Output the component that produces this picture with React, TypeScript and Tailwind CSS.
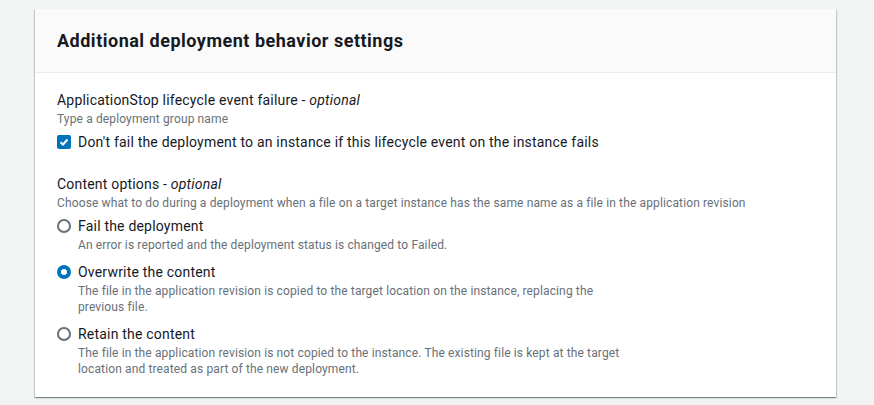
import React from "react";

const font = { fontFamily: "Roboto, 'Liberation Sans', Arial, sans-serif" };

function Radio({ checked }: { checked?: boolean }) {
  return checked ? (
    <span className="mt-[4px] box-border block h-[14px] w-[14px] shrink-0 rounded-full border-[4px] border-[#0073bb] bg-white" />
  ) : (
    <span className="mt-[4px] box-border block h-[14px] w-[14px] shrink-0 rounded-full border-[2px] border-[#687078] bg-white" />
  );
}

function Option({
  checked,
  label,
  desc,
  first,
}: {
  checked?: boolean;
  label: string;
  desc: React.ReactNode;
  first?: boolean;
}) {
  return (
    <div className={first ? "mt-[4px] flex gap-[7px]" : "mt-[8px] flex gap-[7px]"}>
      <Radio checked={checked} />
      <div>
        <div className="text-[14px] leading-[22px] tracking-[0.2px] text-[#16191f]">{label}</div>
        <div className="max-w-[555px] text-[12px] leading-[16px] tracking-[0.13px] text-[#687078]">{desc}</div>
      </div>
    </div>
  );
}

export default function App() {
  return (
    <div className="min-h-[405px] bg-[#f2f3f3] pt-[9px] pl-[35px]" style={font}>
      <div className="w-[801px] bg-white shadow-[0_1px_1px_0_rgba(0,28,36,0.3),1px_1px_1px_0_rgba(0,28,36,0.15),-1px_1px_1px_0_rgba(0,28,36,0.15)]">
        <div className="flex h-[64px] items-center border-b border-[#eaeded] bg-[#fafafa] px-[22px]">
          <h2 className="text-[18px] font-bold leading-[22px] tracking-[0.5px] text-[#16191f]">
            Additional deployment behavior settings
          </h2>
        </div>
        <div className="px-[22px] pt-[16px] pb-[20px]">
          <div className="text-[14px] leading-[22px] tracking-[0.2px] text-[#16191f]">
            ApplicationStop lifecycle event failure - <i>optional</i>
          </div>
          <div className="text-[12px] leading-[16px] tracking-[0.13px] text-[#687078]">Type a deployment group name</div>
          <div className="mt-[4px] flex items-center gap-[7px]">
            <span className="flex h-[14px] w-[14px] items-center justify-center rounded-[2px] bg-[#0073bb]">
              <svg width="10" height="10" viewBox="0 0 10 10">
                <path d="M1.5 5.2 L4 7.5 L8.5 2.5" fill="none" stroke="white" strokeWidth="2" />
              </svg>
            </span>
            <span className="text-[14px] leading-[22px] tracking-[0.2px] text-[#16191f]">
              Don't fail the deployment to an instance if this lifecycle event on the instance fails
            </span>
          </div>

          <div className="mt-[20px] text-[14px] leading-[22px] tracking-[0.2px] text-[#16191f]">
            Content options - <i>optional</i>
          </div>
          <div className="text-[12px] leading-[16px] tracking-[0.13px] text-[#687078]">
            Choose what to do during a deployment when a file on a target instance has the same name as a file in the application revision
          </div>
          <Option
            first
            label="Fail the deployment"
            desc="An error is reported and the deployment status is changed to Failed."
          />
          <Option
            checked
            label="Overwrite the content"
            desc="The file in the application revision is copied to the target location on the instance, replacing the previous file."
          />
          <Option
            label="Retain the content"
            desc="The file in the application revision is not copied to the instance. The existing file is kept at the target location and treated as part of the new deployment."
          />
        </div>
      </div>
    </div>
  );
}
